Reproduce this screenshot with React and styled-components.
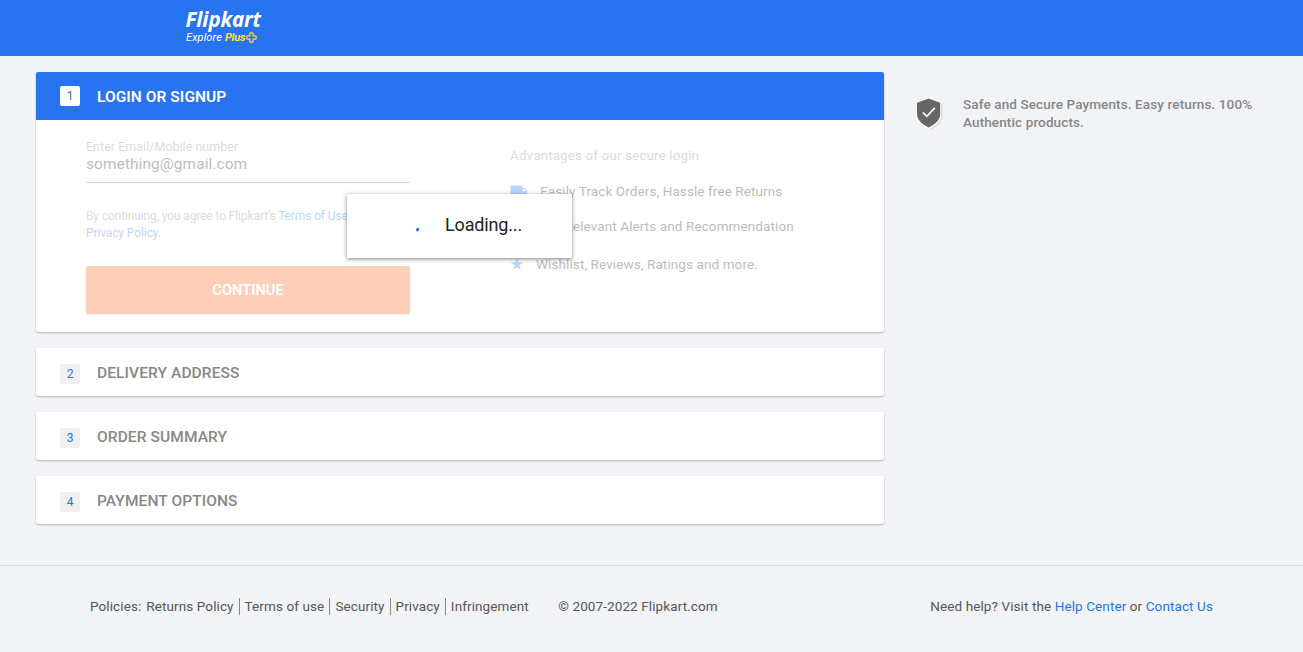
import React from "react";
import styled, { createGlobalStyle } from "styled-components";

const GlobalStyle = createGlobalStyle`
  * { box-sizing: border-box; }
  body {
    margin: 0;
    background: #f1f3f6;
    color: #212121;
    font-family: Roboto, Arial, sans-serif;
    font-size: 14px;
    overflow: hidden;
  }
  a { color: inherit; text-decoration: none; white-space: nowrap; }
`;

const Page = styled.div`
  min-height: 652px;
  background: #f1f3f6;
`;

const Header = styled.header`
  height: 56px;
  padding: 7px 0 0 186px;
  background: #2874f0;
`;

const Logo = styled.div`
  width: 78px;
  color: #fff;
  font-style: italic;
  white-space: nowrap;
`;

const Brand = styled.div`
  font: italic 700 20.5px/25px "Noto Sans", sans-serif;
  letter-spacing: -0.1px;
  margin-left: -0.5px;
`;

const Tagline = styled.div`
  display: flex;
  align-items: center;
  height: 11px;
  font-size: 11px;
  font-weight: 400;
  letter-spacing: 0.1px;
`;

const Plus = styled.span`
  margin: 0 1px 0 3px;
  color: #ffe11b;
  font-weight: 700;
  letter-spacing: -0.2px;
`;

const Main = styled.main`
  display: flex;
  align-items: flex-start;
  gap: 32px;
  height: 509px;
  padding: 16px 36px 0;
`;

const Steps = styled.div`
  display: flex;
  flex-direction: column;
  gap: 16px;
  width: 848px;
`;

const Card = styled.section`
  position: relative;
  height: ${(p) => (p.$open ? 260 : 48)}px;
  background: #fff;
  border-radius: 2px;
  box-shadow: 0 1px 2px 0 rgba(0, 0, 0, 0.25);
`;

const CardHeader = styled.h3`
  display: flex;
  height: 48px;
  margin: 0;
  padding-left: 24px;
  border-radius: 2px 2px 0 0;
  background: ${(p) => (p.$active ? "#2874f0" : "transparent")};
  color: ${(p) => (p.$active ? "#fff" : "#878787")};
  font-size: 15.5px;
  font-weight: ${(p) => (p.$active ? 600 : 500)};
  line-height: 50px;
  letter-spacing: ${(p) => (p.$active ? 0.06 : 0.1)}px;
`;

const StepNumber = styled.span`
  width: 20px;
  height: 20px;
  margin: ${(p) => (p.$active ? 14 : 16)}px 17px 0 0;
  border-radius: 2px;
  background: ${(p) => (p.$active ? "#fff" : "#f0f0f0")};
  color: #2874f0;
  font-size: 12px;
  font-weight: 400;
  letter-spacing: 0;
  line-height: 20px;
  text-align: center;
`;

const LoginBody = styled.div`
  display: flex;
  gap: 100px;
  height: 212px;
  padding: 18px 50px 0;
  opacity: 0.3;
`;

const LoginForm = styled.form`
  width: 324px;
`;

const Field = styled.div`
  height: 45px;
  border-bottom: 1px solid #2874f0;
`;

const Label = styled.div`
  color: #878787;
  font-size: 12.5px;
  line-height: 18px;
  letter-spacing: 0.02px;
`;

const Value = styled.div`
  font-size: 15.5px;
  line-height: 17px;
  letter-spacing: 0.06px;
`;

const Terms = styled.p`
  height: 34px;
  margin: 25px 0 24px;
  color: #878787;
  font-size: 12px;
  line-height: 17px;
  letter-spacing: -0.12px;
`;

const BlueLink = styled.a`
  color: #2874f0;
`;

const ContinueButton = styled.button`
  display: block;
  width: 324px;
  height: 48px;
  padding: 0;
  border: 0;
  border-radius: 2px;
  background: #fb641b;
  box-shadow: 0 1px 2px 0 rgba(0, 0, 0, 0.2);
  color: #fff;
  font: 600 14.5px Roboto, sans-serif;
  letter-spacing: 0.1px;
`;

const Advantages = styled.div`
  padding-top: 8px;
  font-size: 13.5px;
  letter-spacing: 0.1px;
  white-space: nowrap;
`;

const AdvantagesTitle = styled.div`
  margin-bottom: 18px;
  color: #878787;
  line-height: 18px;
`;

const Advantage = styled.div`
  display: flex;
  align-items: center;
  gap: ${(p) => p.$gap}px;
  height: 18px;
  margin-bottom: ${(p) => p.$after || 0}px;
`;

const LoadingBox = styled.div`
  position: absolute;
  top: 122px;
  left: 311px;
  display: flex;
  align-items: center;
  width: 225px;
  height: 64px;
  padding-left: 66px;
  background: #fff;
  box-shadow: 0 1px 4px 0 rgba(0, 0, 0, 0.5);
  font-size: 18px;
  letter-spacing: -0.15px;
`;

const LoadingText = styled.span`
  margin: -3px 0 0 20px;
`;

const Assurance = styled.aside`
  display: flex;
  gap: 18px;
  padding-top: 23px;
  color: #878787;
  font-size: 13.5px;
  font-weight: 500;
  line-height: 18px;
  letter-spacing: 0.12px;
`;

const AssuranceText = styled.p`
  width: 300px;
  margin: 0;
`;

const ShieldIcon = styled.svg`
  margin-top: 1px;
`;

const Footer = styled.footer`
  display: flex;
  align-items: flex-start;
  height: 87px;
  padding: 32px 90px 0;
  border-top: 1px solid #dadce3;
  color: #565656;
  font-size: 13.5px;
  line-height: 17px;
  letter-spacing: 0.1px;
  white-space: nowrap;
`;

const Policies = styled.nav`
  display: flex;
`;

const PolicyLink = styled.a`
  padding: 0 5px;
  border-left: ${(p) => (p.$first ? "0" : "1px solid #878787")};
`;

const Copyright = styled.div`
  margin-left: 24.5px;
`;

const Help = styled.div`
  margin-left: auto;
`;

const PlusMark = () => (
  <svg width="11" height="11" viewBox="0 0 11 11" fill="none">
    <path d="M3.900 1.300Q5.500.1 7.100 1.300V3.900H9.700Q10.900 5.500 9.700 7.100H7.100V9.700Q5.500 10.900 3.900 9.700V7.100H1.300Q.1 5.500 1.300 3.900H3.900z" stroke="#d2c554" strokeWidth="1.600" strokeLinejoin="round" />
  </svg>
);

const Truck = () => (
  <svg width="18" height="14" viewBox="0 0 18 14" fill="#2874f0">
    <path fillRule="evenodd" d="M.5 1.500H12v2.500h2.500L17.200 7v4h-1.500a2 2 0 0 1-4 0H6.700a2 2 0 0 1-4 0H.5zM12.800 5.200v2h3L14 5.200z" />
  </svg>
);

const Bell = () => (
  <svg width="14" height="14" viewBox="0 0 14 14" fill="#2874f0">
    <path d="M7 1a4 4 0 0 0-4 4v4l-1 2h10l-1-2V5a4 4 0 0 0-4-4zM5.500 12h3a1.500 1.500 0 0 1-3 0z" />
  </svg>
);

const Star = () => (
  <svg width="14" height="14" viewBox="0 0 14 14" fill="#2874f0">
    <path d="M7 .8l1.500 4.550h4.800L9.400 8.200l1.500 4.700L7 10l-3.900 2.900L4.600 8.200.7 5.350h4.800z" />
  </svg>
);

const Shield = () => (
  <ShieldIcon width="29" height="36" viewBox="0 0 29 36">
    <path d="M14 3 26.500 7.500v11.500c0 6.500-5.300 11.500-12 15-6.700-3.500-12-8.500-12-15V7.500z" fill="#d8d9dc" />
    <path d="M12.700 1.200 25.200 6v12.500c0 7-6 11.500-12.500 15C6.200 30 0 25.500 0 18.500V6z" fill="#fff" />
    <path d="M12.600 2.500 24.200 6.800v11.200c0 6-5.300 10.500-11.600 13.500-6.300-3-11.600-7.500-11.600-13.500V6.800z" fill="#666" />
    <path d="m6.900 16.500 4 3.800 7.900-8.500" fill="none" stroke="#fff" strokeWidth="1.700" />
  </ShieldIcon>
);

const Spinner = () => (
  <svg width="12" height="12" viewBox="0 0 12 12">
    <path d="M4.400 9.900 4.800 9.200" stroke="#2874f0" strokeWidth="2.900" strokeLinecap="round" />
  </svg>
);

const pendingSteps = ["DELIVERY ADDRESS", "ORDER SUMMARY", "PAYMENT OPTIONS"];
const policies = ["Returns Policy", "Terms of use", "Security", "Privacy", "Infringement"];

export default function App() {
  return (
    <Page>
      <GlobalStyle />
      <Header>
        <Logo>
          <Brand>Flipkart</Brand>
          <Tagline>
            Explore <Plus>Plus</Plus>
            <PlusMark />
          </Tagline>
        </Logo>
      </Header>
      <Main>
        <Steps>
          <Card $open>
            <CardHeader $active>
              <StepNumber $active>1</StepNumber>LOGIN OR SIGNUP
            </CardHeader>
            <LoginBody>
              <LoginForm>
                <Field>
                  <Label>Enter Email/Mobile number</Label>
                  <Value>something@gmail.com</Value>
                </Field>
                <Terms>
                  By continuing, you agree to Flipkart's <BlueLink>Terms of Use</BlueLink> and{" "}
                  <br />
                  <BlueLink>Privacy Policy.</BlueLink>
                </Terms>
                <ContinueButton type="button">CONTINUE</ContinueButton>
              </LoginForm>
              <Advantages>
                <AdvantagesTitle>Advantages of our secure login</AdvantagesTitle>
                <Advantage $gap={12} $after={17}>
                  <Truck />Easily Track Orders, Hassle free Returns
                </Advantage>
                <Advantage $gap={16} $after={20}>
                  <Bell />Get Relevant Alerts and Recommendation
                </Advantage>
                <Advantage $gap={12}>
                  <Star />Wishlist, Reviews, Ratings and more.
                </Advantage>
              </Advantages>
            </LoginBody>
            <LoadingBox>
              <Spinner />
              <LoadingText>Loading...</LoadingText>
            </LoadingBox>
          </Card>
          {pendingSteps.map((title, i) => (
            <Card key={title}>
              <CardHeader>
                <StepNumber>{i + 2}</StepNumber>
                {title}
              </CardHeader>
            </Card>
          ))}
        </Steps>
        <Assurance>
          <Shield />
          <AssuranceText>Safe and Secure Payments. Easy returns. 100% Authentic products.</AssuranceText>
        </Assurance>
      </Main>
      <Footer>
        <Policies>
          Policies:
          {policies.map((name, i) => (
            <PolicyLink key={name} $first={i === 0}>{name}</PolicyLink>
          ))}
        </Policies>
        <Copyright>© 2007-2022 Flipkart.com</Copyright>
        <Help>
          Need help? Visit the <BlueLink>Help Center</BlueLink> or <BlueLink>Contact Us</BlueLink>
        </Help>
      </Footer>
    </Page>
  );
}
